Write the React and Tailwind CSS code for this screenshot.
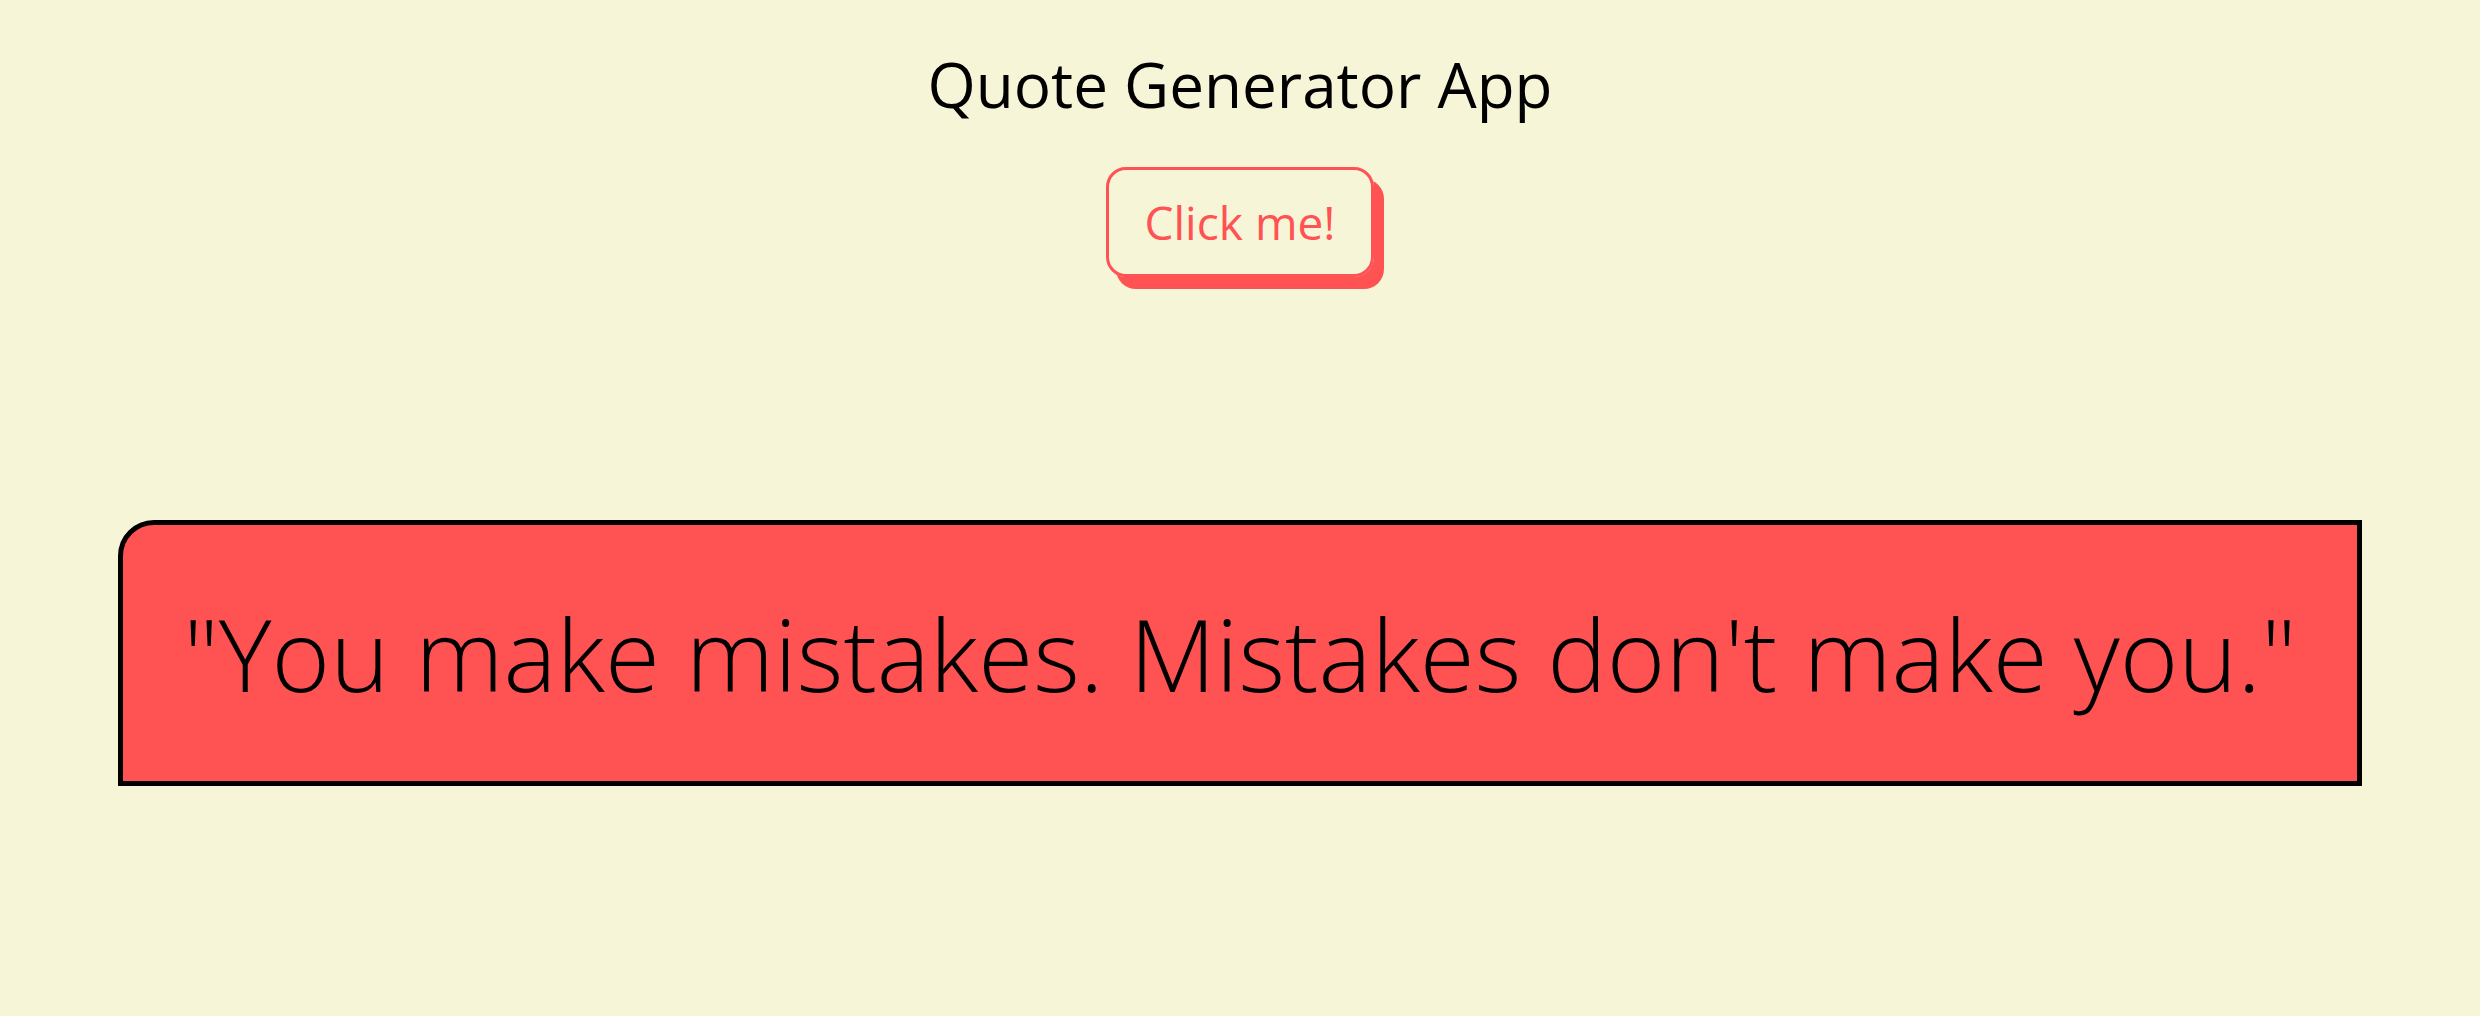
import React, { useState } from 'react';

const quotes = [
  "You make mistakes. Mistakes don't make you.",
];

function App() {
  const [quote, setQuote] = useState(quotes[0]);

  return (
    <div className="min-h-screen w-full bg-[#f6f5d8] flex flex-col items-center font-['Open_Sans',sans-serif] text-black">
      {/* Title */}
      <h1 className="mt-[42px] text-[62px] font-normal leading-[85px]">Quote Generator App</h1>

      {/* Button */}
      <button
        onClick={() => setQuote(quotes[Math.floor(Math.random() * quotes.length)])}
        className="mt-[40px] w-[268px] h-[110px] flex items-center justify-center rounded-[20px] border-[3px] border-[#ff5252] text-[#ff5252] text-[46px] font-normal leading-[63px] shadow-[10px_12px_0_#ff5252]"
      >
        Click me!
      </button>

      {/* Quote box */}
      <div className="mt-[243px] w-[2244px] h-[266px] flex items-center justify-center bg-[#ff5252] border-[5px] border-black rounded-tl-[36px]">
        <p className="text-[100px] font-light leading-none">"{quote}"</p>
      </div>
    </div>
  );
}

export default App;
